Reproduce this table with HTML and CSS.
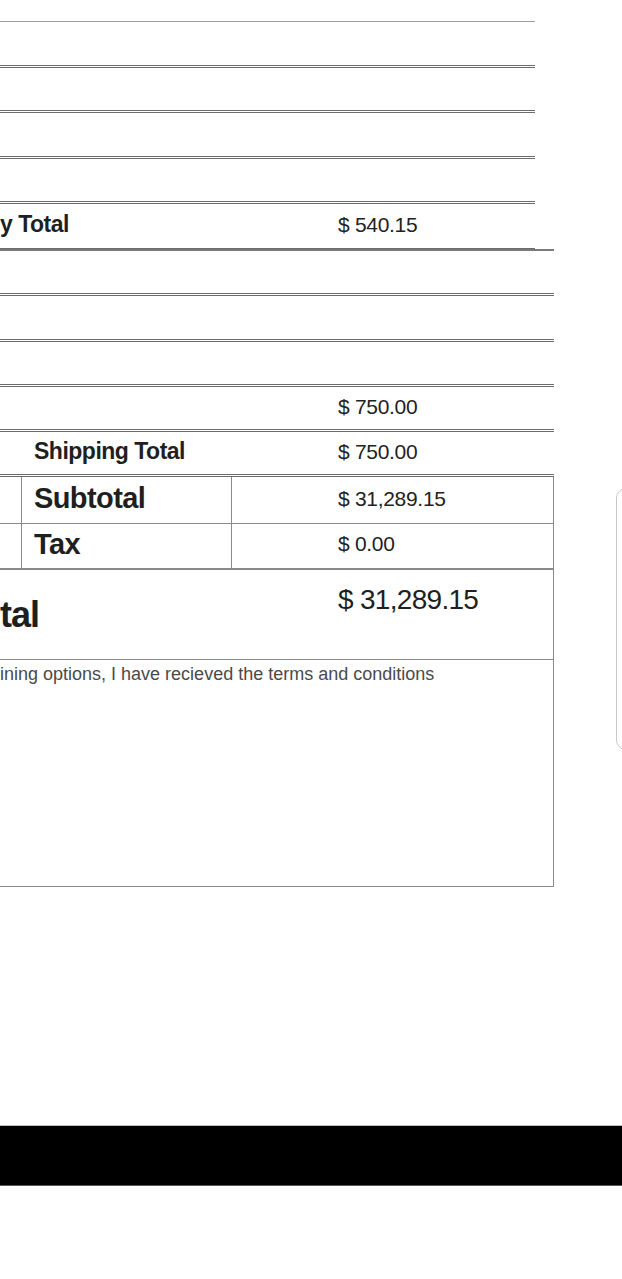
FILE: index.html
```html
<!DOCTYPE html>
<html lang="en">
<head>
<meta charset="utf-8">
<title>Order summary</title>
<link rel="stylesheet" href="styles.css">
</head>
<body>
<div class="page">
  <main class="summary">
    <div class="rows rows-a">
      <div class="row row-lead"></div>
      <div class="row"></div>
      <div class="row"></div>
      <div class="row"></div>
      <div class="row"></div>
      <div class="row row-last">
        <span class="label">y Total</span>
        <span class="value">$ 540.15</span>
      </div>
    </div>
    <div class="rows rows-b">
      <div class="row"></div>
      <div class="row"></div>
      <div class="row"></div>
      <div class="row">
        <span class="value">$ 750.00</span>
      </div>
      <div class="row">
        <span class="label label-indent">Shipping Total</span>
        <span class="value">$ 750.00</span>
      </div>
    </div>
    <div class="totals">
      <div class="split split-sub">
        <div class="cell cell-edge"></div>
        <div class="cell cell-label"><span class="label label-lg">Subtotal</span></div>
        <div class="cell cell-value"><span class="value">$ 31,289.15</span></div>
      </div>
      <div class="split split-tax">
        <div class="cell cell-edge"></div>
        <div class="cell cell-label"><span class="label label-lg">Tax</span></div>
        <div class="cell cell-value"><span class="value">$ 0.00</span></div>
      </div>
      <div class="grand">
        <span class="grand-label">tal</span>
        <span class="grand-value">$ 31,289.15</span>
      </div>
      <div class="terms">
        <p class="terms-text">ining options, I have recieved the terms and conditions</p>
      </div>
    </div>
  </main>
  <aside class="side">
    <div class="side-card"></div>
  </aside>
</div>
<footer class="footer"></footer>
</body>
</html>
```
FILE: styles.css
```css
* {
  box-sizing: border-box;
}

html,
body {
  margin: 0;
  padding: 0;
  background: #ffffff;
}

body {
  overflow-x: hidden;
  font-family: "Liberation Sans", Arial, sans-serif;
  color: #222222;
}

.page {
  display: flex;
  align-items: flex-start;
  gap: 62px;
}

.summary {
  flex: none;
  width: 554px;
}

.rows-a {
  width: 535px;
}

.rows-b {
  width: 554px;
  border-top: 2px solid #7a7a7a;
}

.row {
  display: grid;
  grid-template-columns: 232px 1fr;
  align-items: center;
  height: 45.5px;
  padding-bottom: 3px;
  border-bottom: 3px double #6c6c6c;
}

.row-lead {
  height: 22px;
  padding-bottom: 0;
  border-bottom: 1px solid #a0a0a0;
}

.rows-a .row-last {
  height: 45px;
  border-bottom: 1px solid #6c6c6c;
}

.rows-b .row {
  height: 45.3px;
}

.label {
  grid-column: 1;
  font-weight: bold;
  font-size: 23px;
  letter-spacing: -0.5px;
  white-space: nowrap;
  color: #1f1f1f;
}

.label-indent {
  padding-left: 34px;
}

.value {
  grid-column: 2;
  padding-left: 106px;
  font-size: 21px;
  letter-spacing: -0.3px;
  white-space: nowrap;
  color: #222222;
}

.totals {
  width: 554px;
  border-right: 1px solid #8a8a8a;
}

.split {
  display: grid;
  grid-template-columns: 22px 210px 1fr;
}

.split-sub {
  height: 46.5px;
  border-bottom: 1px solid #8a8a8a;
}

.split-tax {
  height: 46px;
  border-bottom: 2px solid #8a8a8a;
}

.cell {
  display: flex;
  align-items: center;
  padding-bottom: 3px;
}

.cell-edge,
.cell-label {
  border-right: 1px solid #8a8a8a;
}

.cell-label {
  padding-left: 12px;
}

.cell-value .value {
  padding-left: 106px;
}

.label-lg {
  font-size: 29px;
  letter-spacing: -0.6px;
}

.grand {
  display: grid;
  grid-template-columns: 232px 1fr;
  align-items: start;
  height: 90px;
  border-bottom: 1px solid #8a8a8a;
}

.grand-label {
  padding-top: 22px;
  font-size: 36px;
  font-weight: bold;
  letter-spacing: -1px;
  line-height: 46px;
  color: #1f1f1f;
}

.grand-value {
  padding-top: 14px;
  padding-left: 106px;
  font-size: 28px;
  letter-spacing: -0.7px;
  white-space: nowrap;
  color: #1f1f1f;
}

.terms {
  height: 227px;
  border-bottom: 1px solid #8a8a8a;
  padding-top: 4px;
}

.terms-text {
  margin: 0;
  font-size: 18px;
  color: #4a4a4a;
  white-space: nowrap;
}

.side {
  flex: none;
  margin-top: 488px;
}

.side-card {
  width: 280px;
  height: 262px;
  border: 1px solid #c8c8c8;
  border-radius: 10px;
}

.footer {
  margin-top: 238px;
  height: 61px;
  background: #000000;
  border-top: 1px solid #bdbdbd;
  border-bottom: 1px solid #5a5a5a;
}
```
